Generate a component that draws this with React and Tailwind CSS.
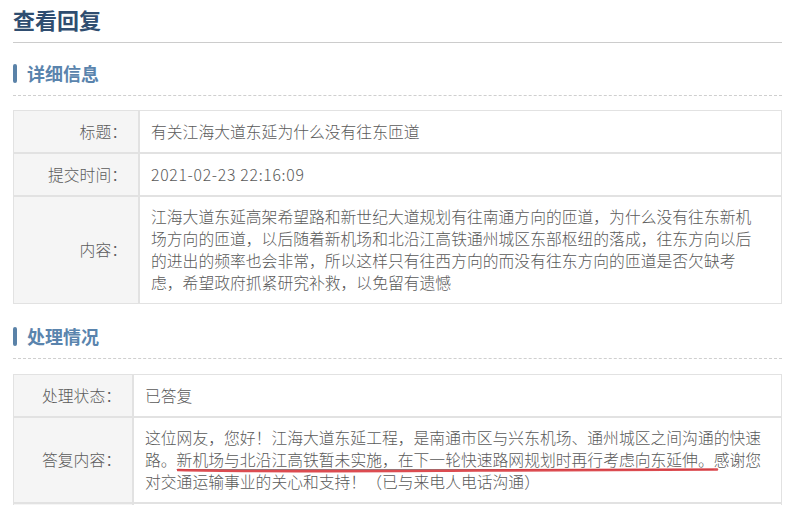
import React from 'react'

const font = { fontFamily: '"Noto Sans CJK SC", "Noto Sans", sans-serif' }

const SectionTitle = ({ children }) => (
  <div className="border-b border-dashed border-[#cfcfcf] pb-[9px]">
    <div className="flex items-center gap-[10px]">
      <span className="block w-[4px] h-[19px] rounded-[2px] bg-[#5a82a8]" />
      <h2 className="text-[18px] font-bold leading-[26px] text-[#5a84ad]">{children}</h2>
    </div>
  </div>
)

const Row = ({ label, labelWidth, children, minH, last, pr }) => (
  <div className={`flex ${last ? '' : 'border-b-2 border-[#e2e2e2]'}`}>
    <div
      className={`shrink-0 bg-[#f5f5f5] border-r-2 border-[#e2e2e2] flex items-center justify-end pr-[11px] ${minH}`}
      style={{ width: labelWidth }}
    >
      {label}
    </div>
    <div className={`flex-1 flex items-center pl-[11px] py-[9px] bg-white ${pr}`}>
      <div className="w-full">{children}</div>
    </div>
  </div>
)

const App = () => {
  return (
    <div
      className="bg-white w-[792px] h-[505px] overflow-hidden text-[15.8px] leading-[22px] text-[#5a5a5a] font-light [text-spacing-trim:space-all]"
      style={font}
    >
      <div className="pl-[13px] pr-[10px]">
        <h1 className="text-[22px] font-bold text-[#2f4d70] leading-[28px] pt-[5px] pb-[9px] border-b border-[#cccccc]">
          查看回复
        </h1>

        <div className="pt-[17px]">
          <SectionTitle>详细信息</SectionTitle>
        </div>

        <div className="mt-[14px] border border-[#e2e2e2]">
          <Row label="标题：" labelWidth="126px" minH="min-h-[41px]" pr="pr-[20px]">
            有关江海大道东延为什么没有往东匝道
          </Row>
          <Row label="提交时间：" labelWidth="126px" minH="min-h-[41px]" pr="pr-[20px]">
            <span className="tracking-[0.7px]">2021-02-23 22:16:09</span>
          </Row>
          <Row label="内容：" labelWidth="126px" minH="min-h-[103px]" pr="pr-[20px]" last>
            江海大道东延高架希望路和新世纪大道规划有往南通方向的匝道，为什么没有往东新机场方向的匝道，以后随着新机场和北沿江高铁通州城区东部枢纽的落成，往东方向以后的进出的频率也会非常，所以这样只有往西方向的而没有往东方向的匝道是否欠缺考虑，希望政府抓紧研究补救，以免留有遗憾
          </Row>
        </div>

        <div className="pt-[19px]">
          <SectionTitle>处理情况</SectionTitle>
        </div>

        <div className="mt-[15px] border border-[#e2e2e2]">
          <Row label="处理状态：" labelWidth="120px" minH="min-h-[41px]" pr="pr-[12px]">
            已答复
          </Row>
          <Row label="答复内容：" labelWidth="120px" minH="min-h-[84px]" pr="pr-[12px]">
            这位网友，您好！江海大道东延工程，是南通市区与兴东机场、通州城区之间沟通的快速路。
            <span className="relative underline decoration-[#888] underline-offset-[3px]">
              新机场与北沿江高铁暂未实施，在下一轮快速路网规划时再行考虑向东延伸。
              <svg
                className="absolute left-[0px] top-[18px] w-[545px] h-[8px] pointer-events-none"
                viewBox="0 0 545 8"
                preserveAspectRatio="none"
              >
                <path
                  d="M1 4 C 80 6, 200 5, 300 4.5 S 480 3, 540 3.5"
                  stroke="#d8383e"
                  strokeWidth="2.6"
                  fill="none"
                  strokeLinecap="round"
                  opacity="0.9"
                />
              </svg>
            </span>
            感谢您对交通运输事业的关心和支持！（已与来电人电话沟通）
          </Row>
          <Row label="" labelWidth="120px" minH="min-h-[41px]" pr="pr-[12px]" last>
            {' '}
          </Row>
        </div>
      </div>
    </div>
  )
}

export default App
